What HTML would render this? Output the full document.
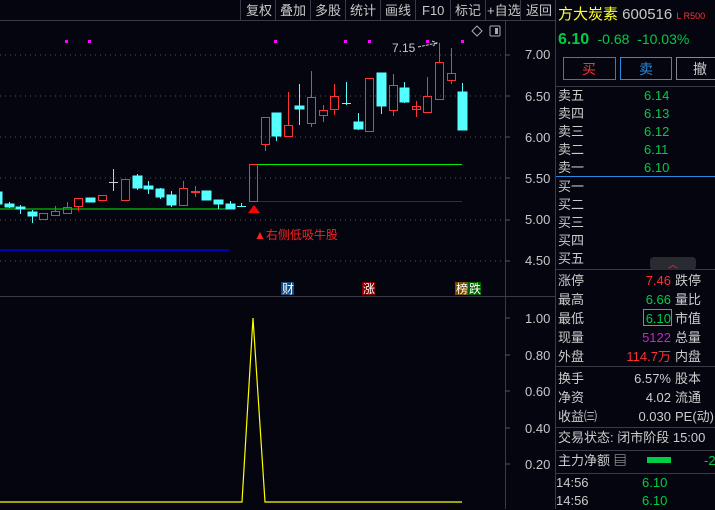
<!DOCTYPE html>
<html><head><meta charset="utf-8"><style>
body{margin:0;width:715px;height:509px;background:#05050f;overflow:hidden;font-family:"Liberation Sans","Noto Sans CJK SC",sans-serif;position:relative}
.t{position:absolute;white-space:nowrap;font-size:13px;line-height:16px}
</style></head><body>
<svg width="715" height="509" style="position:absolute;left:0;top:0" font-family="Liberation Sans, Noto Sans CJK SC, sans-serif">
<line x1="0" y1="20.5" x2="555" y2="20.5" stroke="#3a3a44"/>
<g stroke="#3a3a44">
<line x1="240.5" y1="0" x2="240.5" y2="20"/><line x1="275.5" y1="0" x2="275.5" y2="20"/><line x1="310.5" y1="0" x2="310.5" y2="20"/><line x1="345.5" y1="0" x2="345.5" y2="20"/><line x1="380.5" y1="0" x2="380.5" y2="20"/><line x1="415.5" y1="0" x2="415.5" y2="20"/><line x1="450.5" y1="0" x2="450.5" y2="20"/><line x1="485.5" y1="0" x2="485.5" y2="20"/><line x1="520.5" y1="0" x2="520.5" y2="20"/>
</g>
<g fill="#c8c8c8" font-size="13">
<text x="246" y="15">复权</text><text x="280" y="15">叠加</text><text x="315" y="15">多股</text><text x="350" y="15">统计</text><text x="385" y="15">画线</text><text x="422" y="15">F10</text><text x="455" y="15">标记</text><text x="487" y="15">+自选</text><text x="526" y="15">返回</text>
</g>
<line x1="505.5" y1="21" x2="505.5" y2="509" stroke="#3a3a44"/>
<line x1="555.5" y1="0" x2="555.5" y2="509" stroke="#3a3a44"/>
<line x1="0" y1="296.5" x2="555" y2="296.5" stroke="#3a3a44"/>
<g stroke="#555" stroke-dasharray="1,4">
<line x1="0" y1="55" x2="505" y2="55"/><line x1="0" y1="96" x2="505" y2="96"/><line x1="0" y1="137" x2="505" y2="137"/><line x1="0" y1="178" x2="505" y2="178"/><line x1="0" y1="220" x2="505" y2="220"/><line x1="0" y1="261" x2="505" y2="261"/>
</g>
<g stroke="#555"><line x1="505" y1="55" x2="510" y2="55"/><line x1="505" y1="96" x2="510" y2="96"/><line x1="505" y1="137" x2="510" y2="137"/><line x1="505" y1="178" x2="510" y2="178"/><line x1="505" y1="220" x2="510" y2="220"/><line x1="505" y1="261" x2="510" y2="261"/>
<line x1="505" y1="318" x2="510" y2="318"/><line x1="505" y1="355" x2="510" y2="355"/><line x1="505" y1="391" x2="510" y2="391"/><line x1="505" y1="428" x2="510" y2="428"/><line x1="505" y1="464" x2="510" y2="464"/></g>
<g fill="#c8c8c8" font-size="13">
<text x="525" y="59">7.00</text><text x="525" y="101">6.50</text><text x="525" y="142">6.00</text><text x="525" y="183">5.50</text><text x="525" y="224">5.00</text><text x="525" y="265">4.50</text>
<text x="525" y="323">1.00</text><text x="525" y="360">0.80</text><text x="525" y="396">0.60</text><text x="525" y="433">0.40</text><text x="525" y="469">0.20</text>
</g>
<g fill="#ff00ff"><rect x="65" y="40" width="3" height="3"/><rect x="88" y="40" width="3" height="3"/><rect x="274" y="40" width="3" height="3"/><rect x="344" y="40" width="3" height="3"/><rect x="368" y="40" width="3" height="3"/><rect x="426" y="40" width="3" height="3"/><rect x="461" y="40" width="3" height="3"/></g>
<path d="M477 26 L482 31 L477 36 L472 31 Z" fill="none" stroke="#aaa"/>
<rect x="490" y="26" width="10" height="10" rx="1" fill="none" stroke="#aaa"/><rect x="495" y="28" width="3" height="6" fill="#aaa"/>
<text x="392" y="52" fill="#c8c8c8" font-size="12">7.15</text>
<path d="M418 47 L437 43 M432 41 L437 43 L433 46" stroke="#c8c8c8" fill="none" stroke-dasharray="3,1"/>
<line x1="0" y1="209" x2="230" y2="209" stroke="#00ee00"/>
<line x1="0" y1="250" x2="229" y2="250" stroke="#0000ee" stroke-width="1.5"/>
<line x1="253" y1="164.5" x2="462" y2="164.5" stroke="#00ee00"/>
<line x1="253" y1="201.5" x2="462" y2="201.5" stroke="#2020aa"/>
<path d="M248 213 L254 205 L260 213 Z" fill="#ff0000"/>
<g stroke="#55ffff" fill="#55ffff">
<rect x="-2" y="192" width="4" height="12"/>
<line x1="9.5" y1="202" x2="9.5" y2="208"/><rect x="5" y="204" width="9" height="3"/>
<line x1="20.5" y1="205" x2="20.5" y2="214"/><rect x="16" y="207" width="9" height="2"/>
<line x1="32.5" y1="210" x2="32.5" y2="223"/><rect x="28" y="212" width="9" height="4"/>
<rect x="86" y="198" width="9" height="4"/>
<rect x="133" y="176" width="9" height="12"/><line x1="137.5" y1="174" x2="137.5" y2="190"/>
<line x1="148.5" y1="181" x2="148.5" y2="194"/><rect x="144" y="186" width="9" height="3"/>
<line x1="160.5" y1="188" x2="160.5" y2="199"/><rect x="156" y="189" width="8" height="8"/>
<line x1="171.5" y1="191" x2="171.5" y2="207"/><rect x="167" y="195" width="9" height="10"/>
<rect x="202" y="191" width="9" height="9"/>
<line x1="218.5" y1="200" x2="218.5" y2="209"/><rect x="214" y="200" width="9" height="4"/>
<line x1="230.5" y1="201" x2="230.5" y2="209"/><rect x="226" y="204" width="9" height="5"/>
<line x1="241.5" y1="203" x2="241.5" y2="207"/><line x1="237" y1="206.5" x2="246" y2="206.5"/>
<line x1="276.5" y1="133" x2="276.5" y2="141"/><rect x="272" y="113" width="9" height="23"/>
<line x1="299.5" y1="84" x2="299.5" y2="125"/><rect x="295" y="106" width="9" height="3"/>
<line x1="346.5" y1="82" x2="346.5" y2="105"/><line x1="342" y1="103.5" x2="351" y2="103.5"/>
<line x1="358.5" y1="113" x2="358.5" y2="130"/><rect x="354" y="122" width="9" height="7"/>
<line x1="381.5" y1="100" x2="381.5" y2="114"/><rect x="377" y="73" width="9" height="33"/>
<line x1="404.5" y1="82" x2="404.5" y2="103"/><rect x="400" y="88" width="9" height="14"/>
<line x1="462.5" y1="83" x2="462.5" y2="92"/><rect x="458" y="92" width="9" height="38"/>
</g>
<g stroke="#ff3333" fill="none">
<rect x="39.5" y="213.5" width="8" height="6"/>
<rect x="51.5" y="211.5" width="8" height="4"/><line x1="55.5" y1="206" x2="55.5" y2="211"/>
<rect x="63.5" y="207.5" width="8" height="6"/><line x1="67.5" y1="202" x2="67.5" y2="207"/>
<rect x="74.5" y="198.5" width="8" height="8"/><line x1="78.5" y1="207" x2="78.5" y2="211"/>
<rect x="98.5" y="195.5" width="8" height="5"/>
<rect x="121.5" y="179.5" width="8" height="21"/>
<rect x="179.5" y="188.5" width="8" height="17"/><line x1="183.5" y1="181" x2="183.5" y2="188"/>
<line x1="195.5" y1="186" x2="195.5" y2="197"/><line x1="191" y1="192" x2="200" y2="192" stroke-width="2"/>
<rect x="249.5" y="164.5" width="8" height="37"/>
<rect x="261.5" y="117.5" width="8" height="27"/><line x1="265.5" y1="145" x2="265.5" y2="151"/>
<rect x="284.5" y="125.5" width="8" height="11"/><line x1="288.5" y1="92" x2="288.5" y2="125"/>
<rect x="307.5" y="97.5" width="8" height="26"/><line x1="311.5" y1="71" x2="311.5" y2="97"/><line x1="311.5" y1="124" x2="311.5" y2="127"/>
<rect x="319.5" y="110.5" width="8" height="5"/><line x1="323.5" y1="105" x2="323.5" y2="110"/><line x1="323.5" y1="116" x2="323.5" y2="122"/>
<rect x="330.5" y="96.5" width="8" height="13"/><line x1="334.5" y1="84" x2="334.5" y2="96"/><line x1="334.5" y1="110" x2="334.5" y2="115"/>
<rect x="365.5" y="78.5" width="8" height="53"/>
<rect x="389.5" y="85.5" width="8" height="25"/><line x1="393.5" y1="74" x2="393.5" y2="85"/><line x1="393.5" y1="111" x2="393.5" y2="116"/>
<rect x="412.5" y="106.5" width="8" height="3"/><line x1="416.5" y1="101" x2="416.5" y2="117"/>
<rect x="423.5" y="96.5" width="8" height="16"/><line x1="427.5" y1="77" x2="427.5" y2="96"/>
<rect x="435.5" y="62.5" width="8" height="37"/><line x1="439.5" y1="43" x2="439.5" y2="62"/>
<rect x="447.5" y="73.5" width="8" height="7"/><line x1="451.5" y1="48" x2="451.5" y2="73"/><line x1="451.5" y1="81" x2="451.5" y2="84"/>
</g>
<g stroke="#cccccc"><line x1="113.5" y1="169" x2="113.5" y2="191"/><line x1="109" y1="182.5" x2="118" y2="182.5"/></g>
<text x="254" y="239" fill="#ff2020" font-size="12">▲右侧低吸牛股</text>
<rect x="281" y="282" width="13" height="13" fill="#124a80"/><text x="282" y="293" fill="#fff" font-size="12">财</text>
<rect x="362" y="282" width="13" height="13" fill="#800000"/><text x="363" y="293" fill="#fff" font-size="12">涨</text>
<rect x="455" y="282" width="13" height="13" fill="#7a4a00"/><text x="456" y="293" fill="#fff" font-size="12">榜</text>
<rect x="468" y="282" width="13" height="13" fill="#006000"/><text x="469" y="293" fill="#fff" font-size="12">跌</text>
<polyline points="0,502 242,502 253,318 265,502 462,502" fill="none" stroke="#ffff00" stroke-width="1.2"/>
<g stroke="#3a3a44"><line x1="556" y1="86.5" x2="715" y2="86.5"/><line x1="556" y1="269.5" x2="715" y2="269.5"/><line x1="556" y1="366.5" x2="715" y2="366.5"/><line x1="556" y1="427.5" x2="715" y2="427.5"/><line x1="556" y1="450.5" x2="715" y2="450.5"/><line x1="556" y1="473.5" x2="715" y2="473.5"/></g>
<line x1="556" y1="176.5" x2="715" y2="176.5" stroke="#2a8ae0"/>
<rect x="650" y="257" width="46" height="13" rx="4" fill="#2a2a33"/><text x="668" y="268" fill="#ff3030" font-size="10">︿</text>
<rect x="563.5" y="57.5" width="52" height="22" fill="none" stroke="#ff3030"/>
<rect x="620.5" y="57.5" width="51" height="22" fill="none" stroke="#2a8ae0"/>
<rect x="676.5" y="57.5" width="45" height="22" fill="none" stroke="#888"/>
<rect x="643.5" y="309.5" width="28" height="16" fill="none" stroke="#888"/>
<rect x="647" y="457" width="24" height="6" fill="#00cc44"/>
</svg>
<div class="t" style="left:558px;top:7px;font-size:15px;color:#ffff33">方大炭素 <span style="color:#c8c8c8">600516</span> <span style="color:#ff3030;font-size:9px">L R500</span></div>
<div class="t" style="left:558px;top:31px;font-size:16px;color:#00cc44"><b>6.10</b> <span style="font-size:14px">&nbsp;-0.68 &nbsp;-10.03%</span></div>
<div class="t" style="left:582px;top:61px;color:#ff3030;font-size:14px">买</div>
<div class="t" style="left:639px;top:61px;color:#2a8ae0;font-size:14px">卖</div>
<div class="t" style="left:693px;top:61px;color:#ccc;font-size:14px">撤</div>
<div class="t" style="left:558px;top:87px;color:#ccc;line-height:18px">卖五<br>卖四<br>卖三<br>卖二<br>卖一</div>
<div class="t" style="left:644px;top:87px;color:#00cc44;line-height:18px">6.14<br>6.13<br>6.12<br>6.11<br>6.10</div>
<div class="t" style="left:558px;top:178px;color:#ccc;line-height:18px">买一<br>买二<br>买三<br>买四<br>买五</div>
<div class="t" style="left:558px;top:271px;color:#ccc;line-height:19px">涨停<br>最高<br>最低<br>现量<br>外盘</div>
<div class="t" style="left:600px;top:271px;width:71px;text-align:right;line-height:19px"><span style="color:#ff3030">7.46</span><br><span style="color:#00cc44">6.66</span><br><span style="color:#00cc44">6.10</span><br><span style="color:#cc22cc">5122</span><br><span style="color:#ff3030">114.7万</span></div>
<div class="t" style="left:675px;top:271px;color:#ccc;line-height:19px">跌停<br>量比<br>市值<br>总量<br>内盘</div>
<div class="t" style="left:558px;top:369px;color:#ccc;line-height:19px">换手<br>净资<br>收益㈢</div>
<div class="t" style="left:600px;top:369px;width:71px;text-align:right;color:#ccc;line-height:19px">6.57%<br>4.02<br>0.030</div>
<div class="t" style="left:675px;top:369px;color:#ccc;line-height:19px">股本<br>流通<br>PE(动)</div>
<div class="t" style="left:558px;top:430px;color:#ccc">交易状态: 闭市阶段 15:00</div>
<div class="t" style="left:558px;top:453px;color:#ccc">主力净额 ▤</div>
<div class="t" style="left:704px;top:453px;color:#00cc44">-2</div>
<div class="t" style="left:556px;top:474px;color:#ccc;line-height:18px">14:56<br>14:56</div>
<div class="t" style="left:642px;top:474px;color:#00cc44;line-height:18px">6.10<br>6.10</div>
</body></html>
